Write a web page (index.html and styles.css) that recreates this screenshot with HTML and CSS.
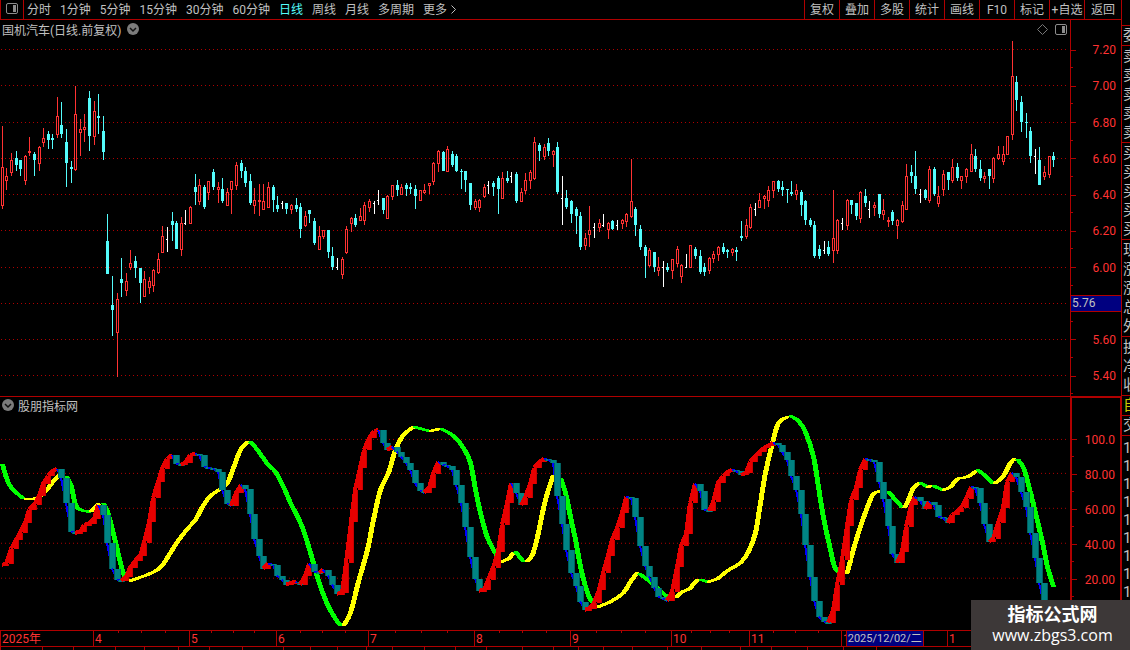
FILE: index.html
```
<!DOCTYPE html>
<html lang="zh-CN">
<head>
    <meta charset="UTF-8">
    <meta name="viewport" content="width=device-width, initial-scale=1.0">
    <title>国机汽车 日线</title>
    <link rel="stylesheet" href="styles.css">
</head>
<body>
    <div class="app">
        <div class="main">
            <!-- Period toolbar -->
            <div class="toolbar">
                <button class="panel-btn" aria-label="侧栏">
                    <svg width="12" height="11" viewBox="0 0 12 11">
                        <rect x="0.5" y="0.5" width="11" height="10" rx="1.5" fill="none" stroke="#8c8c8c"/>
                        <rect x="7" y="2" width="3" height="7" fill="#8c8c8c"/>
                    </svg>
                </button>
                <div class="periods">
                    <button>分时</button>
                    <button>1分钟</button>
                    <button>5分钟</button>
                    <button>15分钟</button>
                    <button>30分钟</button>
                    <button>60分钟</button>
                    <button class="active">日线</button>
                    <button>周线</button>
                    <button>月线</button>
                    <button>多周期</button>
                    <button>更多<svg class="more" width="5" height="9" viewBox="0 0 5 9"><path d="M0.5 0.5L4.5 4.5L0.5 8.5" fill="none" stroke="#c0c0c0"/></svg></button>
                </div>
                <div class="tools">
                    <button>复权</button>
                    <button>叠加</button>
                    <button>多股</button>
                    <button>统计</button>
                    <button>画线</button>
                    <button>F10</button>
                    <button>标记</button>
                    <button>+自选</button>
                    <button>返回</button>
                </div>
            </div>

            <!-- Price chart -->
            <div class="pane price">
                <div class="plot">
                    <svg id="price" class="chart" viewBox="0 20 1070 376" preserveAspectRatio="none"></svg>
                    <div class="pane-title">
                        <span>国机汽车(日线.前复权)</span>
                        <svg width="12" height="12" viewBox="0 0 12 12">
                            <circle cx="6" cy="6" r="6" fill="#7c7c7c"/>
                            <path d="M3 5L6 8L9 5" fill="none" stroke="#111" stroke-width="1.5"/>
                        </svg>
                    </div>
                    <div class="pane-icons">
                        <svg width="11" height="11" viewBox="0 0 11 11"><path d="M5.5 0.5L10.5 5.5L5.5 10.5L0.5 5.5Z" fill="none" stroke="#777"/></svg>
                        <svg width="12" height="11" viewBox="0 0 12 11">
                            <rect x="0.5" y="0.5" width="11" height="10" rx="1.5" fill="none" stroke="#8c8c8c"/>
                            <rect x="7" y="2" width="3" height="7" fill="#8c8c8c"/>
                        </svg>
                    </div>
                </div>
                <ul class="axis">
                    <li>7.20</li>
                    <li>7.00</li>
                    <li>6.80</li>
                    <li>6.60</li>
                    <li>6.40</li>
                    <li>6.20</li>
                    <li>6.00</li>
                    <li class="cursor"><span>5.76</span></li>
                    <li>5.60</li>
                    <li>5.40</li>
                </ul>
            </div>

            <!-- Indicator chart -->
            <div class="pane indicator">
                <div class="plot">
                    <svg id="indicator" class="chart" viewBox="0 397 1070 233" preserveAspectRatio="none"></svg>
                    <div class="pane-title">
                        <svg width="12" height="12" viewBox="0 0 12 12">
                            <circle cx="6" cy="6" r="6" fill="#7c7c7c"/>
                            <path d="M3 5L6 8L9 5" fill="none" stroke="#111" stroke-width="1.5"/>
                        </svg>
                        <span>股朋指标网</span>
                    </div>
                </div>
                <ul class="axis">
                    <li>100.0</li>
                    <li>80.00</li>
                    <li>60.00</li>
                    <li>40.00</li>
                    <li>20.00</li>
                </ul>
            </div>

            <!-- Time axis -->
            <div class="months">
                <span class="first">2025年</span>
                <span>4</span>
                <span>5</span>
                <span>6</span>
                <span>7</span>
                <span>8</span>
                <span>9</span>
                <span>10</span>
                <span>11</span>
                <span class="plain">1<time datetime="2025-12-02">2025/12/02/二</time></span>
                <span class="plain">1</span>
            </div>

            <div class="tabs" id="tabs"></div>
        </div>

        <!-- Quote strip, cut off by the window edge -->
        <div class="strip">
            <div class="group head"><span>委</span></div>
            <div class="group"><span>卖</span><span>卖</span><span>卖</span><span>卖</span><span>卖</span></div>
            <div class="group"><span>买</span><span>买</span><span>买</span><span>买</span><span>买</span></div>
            <div class="group"><span>现</span><span>涨</span><span>涨</span><span>总</span><span>外</span></div>
            <div class="group"><span>换</span><span>净</span><span>收</span></div>
            <div class="group own"><span>自</span></div>
            <div class="group deal"><span>交</span></div>
            <div class="ticks"><span>1</span><span>1</span><span>1</span><span>1</span><span>1</span><span>1</span><span>1</span><span>1</span><span>1</span></div>
        </div>

        <div class="badge">
            <strong>指标公式网</strong>
            <span>www.zbgs3.com</span>
        </div>
    </div>
    <script src="script.js"></script>
</body>
</html>
```

FILE: styles.css
```
* {
    box-sizing: border-box;
}

body {
    margin: 0;
    background: #000;
    color: #c0c0c0;
    font-family: Roboto, "Noto Sans CJK SC", sans-serif;
    font-size: 12px;
}

button {
    margin: 0;
    padding: 0;
    border: none;
    background: none;
    color: inherit;
    font: inherit;
    cursor: pointer;
}

.app {
    position: relative;
    display: grid;
    grid-template-columns: minmax(0, 1fr) 9px;
    height: 100vh;
    overflow: hidden;
}

.main {
    display: flex;
    flex-direction: column;
    min-width: 0;
    min-height: 0;
}

/* Toolbar */
.toolbar {
    display: flex;
    height: 20px;
    border-bottom: 1px solid #b00000;
    white-space: nowrap;
    line-height: 18px;
}

.panel-btn {
    display: flex;
    align-items: center;
    justify-content: center;
    width: 24px;
    padding-bottom: 2px;
    border-left: 1px solid #b00000;
    border-right: 1px solid #b00000;
}

.periods {
    display: flex;
    gap: 9px;
    padding-left: 3px;
}

.periods .active {
    color: #54fcfc;
}

.more {
    margin-left: 4px;
}

.tools {
    display: flex;
    margin-left: auto;
}

.tools button {
    width: 35px;
    border-left: 1px solid #b00000;
}

.tools button:last-child {
    width: 37px;
}

/* Chart panes */
.pane {
    display: grid;
    grid-template-columns: minmax(0, 1fr) 51px;
    min-height: 0;
}

.price {
    flex: 377 1 0;
    border-bottom: 1px solid #b00000;
}

.indicator {
    flex: 233 1 0;
}

.plot {
    position: relative;
    min-height: 0;
}

.chart {
    display: block;
    width: 100%;
    height: 100%;
    shape-rendering: crispEdges;
}

.plot .chart {
    position: absolute;
    inset: 0;
}

.pane-title {
    position: absolute;
    top: 0;
    left: 2px;
    display: flex;
    align-items: center;
    gap: 6px;
    height: 18px;
}

.indicator .pane-title {
    gap: 4px;
    height: 16px;
}

.pane-icons {
    position: absolute;
    top: 4px;
    right: 3px;
    display: flex;
    gap: 7px;
}

.axis {
    display: flex;
    flex-direction: column;
    min-height: 0;
    margin: 0;
    padding: 12px 0 2px;
    border-left: 1px solid #b00000;
    list-style: none;
    color: #ff3232;
    font-size: 12px;
}

.axis li {
    flex: 1;
    display: flex;
    align-items: center;
    justify-content: flex-end;
    padding-right: 5px;
    background:
        linear-gradient(#b00000, #b00000) 0 50% / 5px 1px no-repeat,
        linear-gradient(#b00000, #b00000) 0 100% / 2px 1px no-repeat;
}

.axis .cursor {
    padding: 0;
}

.cursor span {
    width: 100%;
    height: 17px;
    padding-left: 1px;
    border: solid #b00000;
    border-width: 1px 0;
    background: #000080;
    color: #c0c0c0;
    line-height: 15px;
}

.indicator .axis {
    padding: 24px 0 33px;
    border: solid #b00000;
    border-width: 1px 1px 0 2px;
}

/* Time axis */
.months {
    display: grid;
    grid-template-columns: 93fr 96fr 87fr 92fr 106fr 96fr 101fr 78fr 92fr 106fr 174fr;
    height: 16px;
    border-top: 1px solid #b00000;
    color: #ff3232;
    line-height: 16px;
    white-space: nowrap;
}

.months > span {
    display: flex;
    min-width: 0;
    padding-left: 1px;
    border-left: 1px solid #b00000;
    background:
        linear-gradient(#b00000, #b00000) 25% 0 / 1px 2px no-repeat,
        linear-gradient(#b00000, #b00000) 50% 0 / 1px 2px no-repeat,
        linear-gradient(#b00000, #b00000) 75% 0 / 1px 2px no-repeat;
}

.months .first,
.months .plain {
    background: none;
}

.months time {
    margin-left: -4px;
    padding: 0 1px;
    border: solid #b00000;
    border-width: 0 1px;
    background: #000080;
    color: #c0c0c0;
    font-size: 11px;
}

/* Top edge of the tab row under the charts */
.tabs {
    display: flex;
    height: 4px;
    border-top: 1px solid #b00000;
    overflow: hidden;
}

.tabs i {
    border-left: 1px solid #b00000;
}

/* Quote strip */
.strip {
    padding-top: 25px;
    border-left: 1px solid #b00000;
    overflow: hidden;
    font-size: 15px;
}

.strip span {
    display: block;
    width: 16px;
    height: 19px;
    padding-left: 1px;
    line-height: 19px;
}

.group {
    padding-top: 1px;
    border-top: 1px solid #b00000;
}

.group.head {
    padding: 0;
}

.group.own {
    padding: 0;
    color: #c8c800;
}

.group.deal {
    padding: 0;
    border-bottom: 1px solid #b00000;
}

.ticks {
    padding-top: 3px;
}

.ticks span {
    height: 18px;
    line-height: 18px;
}

/* Site badge */
.badge {
    position: absolute;
    right: 0;
    bottom: 0;
    display: flex;
    flex-direction: column;
    align-items: center;
    width: 159px;
    height: 50px;
    padding-top: 4px;
    padding-left: 4px;
    background: #3d3838;
    color: #fff;
    font-family: "Open Sans", "Noto Sans CJK SC", sans-serif;
    font-size: 16px;
    line-height: 21px;
}

.badge strong {
    font-size: 18px;
}
```

FILE: script.js
```
const NS = 'http://www.w3.org/2000/svg';

// one bar per trading day: high, body top, body bottom, low, kind (r up, c down, w flat)
const bars = [
    [126,167,206,209,'r'],[168,176,181,190,'r'],[153,160,173,176,'r'],[151,158,165,171,'c'],[160,160,169,176,'c'],
    [155,156,181,185,'r'],[137,151,153,156,'r'],[152,154,160,176,'c'],[146,147,164,171,'r'],[128,138,143,147,'r'],
    [131,134,140,149,'c'],[134,138,140,149,'c'],[97,116,135,138,'r'],[102,125,134,138,'c'],[129,142,163,187,'c'],
    [161,167,169,183,'c'],[86,114,170,171,'r'],[119,129,133,156,'r'],[114,127,130,142,'r'],[91,98,136,151,'c'],
    [101,111,137,145,'r'],[94,116,118,134,'c'],[116,131,152,160,'c'],[214,241,274,274,'c'],[276,305,310,336,'c'],
    [293,299,333,377,'r'],[258,279,283,297,'c'],[273,281,291,296,'r'],[250,263,268,270,'r'],[256,261,268,278,'c'],
    [268,268,283,303,'c'],[271,279,297,297,'r'],[277,281,288,294,'r'],[269,270,286,292,'r'],[253,259,273,274,'r'],
    [226,236,253,253,'r'],[227,239,239,252,'w'],[212,221,225,241,'c'],[221,223,249,249,'c'],[217,223,250,256,'r'],
    [210,223,223,225,'w'],[206,207,224,224,'r'],[174,187,192,205,'c'],[179,185,202,205,'r'],[185,187,207,209,'c'],
    [181,181,193,200,'r'],[169,172,187,190,'c'],[182,187,190,203,'r'],[178,189,201,203,'c'],[188,192,206,206,'r'],
    [181,181,190,214,'r'],[162,165,186,190,'r'],[160,163,171,178,'c'],[167,171,183,187,'c'],[174,181,203,205,'c'],
    [188,200,206,214,'r'],[184,200,202,216,'r'],[184,201,210,210,'r'],[182,187,208,208,'r'],[185,187,200,212,'c'],
    [196,205,209,212,'c'],[201,203,203,209,'w'],[203,203,209,214,'c'],[204,205,210,214,'r'],[198,205,209,212,'c'],
    [203,207,229,238,'c'],[211,216,226,227,'r'],[210,210,214,223,'c'],[218,221,243,245,'c'],[226,236,250,250,'r'],
    [230,230,237,239,'r'],[230,230,252,258,'c'],[247,256,267,270,'c'],[258,267,267,270,'w'],[257,259,275,279,'r'],
    [226,229,253,254,'r'],[217,218,224,232,'r'],[214,218,225,227,'c'],[208,216,221,221,'r'],[202,205,221,225,'r'],
    [199,201,208,212,'r'],[201,203,203,214,'w'],[190,200,200,205,'w'],[198,198,210,214,'c'],[195,196,219,219,'r'],
    [185,185,197,200,'r'],[180,185,190,196,'c'],[184,187,195,195,'r'],[183,185,189,196,'c'],[183,187,189,194,'c'],
    [185,189,196,209,'c'],[190,190,201,201,'r'],[184,190,193,194,'r'],[183,183,186,194,'r'],[162,163,182,185,'r'],
    [150,151,164,172,'r'],[151,152,171,171,'c'],[146,149,172,172,'r'],[151,154,165,167,'c'],[154,156,171,172,'c'],
    [169,171,172,189,'c'],[171,171,180,192,'c'],[183,183,205,210,'c'],[199,201,208,210,'r'],[199,200,208,212,'r'],
    [184,187,197,198,'r'],[181,185,185,194,'w'],[181,183,187,196,'c'],[176,178,189,214,'c'],[172,178,199,199,'r'],
    [171,178,181,183,'c'],[172,176,176,183,'w'],[172,174,201,203,'c'],[188,192,202,202,'r'],[173,180,191,194,'r'],
    [170,172,181,189,'r'],[137,142,179,180,'r'],[143,145,151,161,'c'],[144,147,157,160,'r'],[138,143,151,156,'c'],
    [150,151,155,167,'r'],[142,147,192,194,'c'],[176,198,198,225,'w'],[190,198,207,209,'c'],[200,201,214,223,'c'],
    [207,209,216,234,'c'],[212,216,247,250,'c'],[233,238,246,250,'r'],[206,230,235,247,'r'],[223,227,227,238,'w'],
    [219,223,228,232,'r'],[214,225,225,227,'w'],[222,223,230,239,'r'],[220,221,229,230,'c'],[220,225,225,230,'w'],
    [219,220,224,229,'r'],[213,214,222,227,'r'],[159,201,217,218,'r'],[207,209,225,236,'c'],[225,229,247,250,'c'],
    [245,247,256,278,'c'],[248,250,266,267,'r'],[252,252,267,272,'c'],[257,267,271,276,'r'],[261,267,267,287,'w'],
    [263,267,270,272,'c'],[259,259,271,279,'r'],[246,249,264,267,'r'],[264,265,277,283,'r'],[254,267,267,268,'w'],
    [245,245,268,268,'r'],[247,249,256,259,'c'],[250,256,272,274,'c'],[263,267,272,276,'c'],[257,258,271,274,'r'],
    [251,254,259,263,'r'],[246,247,255,261,'r'],[243,247,252,254,'c'],[249,250,252,258,'c'],[248,249,253,256,'r'],
    [247,250,252,261,'c'],[221,236,238,241,'c'],[219,225,237,239,'r'],[204,207,228,229,'r'],[203,209,209,216,'w'],
    [193,200,208,208,'r'],[195,196,199,209,'r'],[186,190,201,207,'r'],[181,181,191,198,'r'],[180,181,189,192,'c'],
    [181,187,190,196,'c'],[189,189,190,203,'c'],[181,192,194,196,'c'],[184,190,195,200,'r'],[190,192,205,216,'c'],
    [200,201,220,225,'c'],[218,220,225,227,'c'],[221,225,256,258,'c'],[245,249,256,259,'c'],[241,250,250,254,'w'],
    [241,247,254,256,'c'],[190,238,251,263,'r'],[219,220,251,254,'r'],[218,223,223,230,'w'],[199,200,226,230,'r'],
    [200,200,205,214,'c'],[203,203,216,220,'c'],[191,192,219,223,'r'],[189,196,203,207,'c'],[201,209,209,218,'w'],
    [202,205,208,216,'r'],[194,194,214,218,'c'],[199,210,215,220,'r'],[217,220,222,227,'r'],[210,212,221,225,'c'],
    [219,220,226,239,'r'],[201,205,222,223,'r'],[164,176,210,210,'r'],[165,172,176,183,'c'],[151,176,189,194,'c'],
    [189,194,194,203,'w'],[189,190,198,200,'c'],[166,169,201,203,'r'],[167,169,194,196,'c'],[186,196,204,207,'r'],
    [170,174,190,196,'r'],[172,172,180,190,'c'],[159,167,181,183,'r'],[163,167,178,181,'c'],[176,176,181,189,'r'],
    [168,169,177,183,'r'],[144,154,172,172,'r'],[149,156,169,172,'c'],[160,169,178,181,'c'],[172,176,179,183,'r'],
    [169,169,176,189,'c'],[157,158,179,183,'r'],[146,154,159,160,'r'],[146,154,162,165,'r'],[136,136,155,155,'r'],
    [41,76,135,140,'r'],[76,82,100,111,'c'],[96,102,122,132,'c'],[113,122,123,138,'c'],[127,131,156,163,'c'],
    [149,156,156,174,'w'],[147,160,185,185,'c'],[166,172,177,180,'r'],[156,156,175,178,'r'],[152,156,160,167,'c']
];

// fast line, one value per day
const fast = [
    565,564,549,540,533,523,510,505,496,484,476,471,469,478,503,532,533,532,525,524,519,505,515,543,569,
    580,581,577,568,561,556,543,522,498,482,469,459,455,464,465,463,455,454,455,467,468,469,472,490,504,
    506,493,485,489,514,539,556,569,564,565,576,580,585,583,582,585,576,564,572,573,570,576,585,594,593,
    563,522,490,468,450,438,431,430,443,450,447,452,457,463,470,483,491,493,488,474,462,465,466,470,485,
    503,527,557,579,591,590,580,568,552,525,503,483,493,505,498,484,468,462,459,460,463,496,524,550,573,
    586,602,610,609,603,590,573,556,540,528,513,497,498,517,546,566,577,588,597,599,601,592,567,546,534,
    503,484,491,510,511,502,483,476,472,470,471,475,473,462,456,452,448,446,443,445,452,460,476,490,514,
    545,577,601,617,622,623,611,585,560,526,500,488,470,459,460,462,482,499,526,554,563,552,527,505,497,
    501,509,502,505,517,518,523,515,512,508,499,487,488,503,524,542,539,523,508,482,473,477,492,507,533,
    558,583,605,620,626
];

// slow line, cut where its direction changes: y up, g down
const slow = [
    ['g', [2,464,5,475,9,485,15,492,23,499]],
    ['y', [25,499,37,498,47,489,53,481,60,474]],
    ['g', [66,476,71,487,75,505,80,510,89,512]],
    ['y', [90,512,94,508,98,504]],
    ['g', [103,503,107,512,112,530,118,555,122,571,126,580]],
    ['y', [130,581,147,575,157,570,163,564,170,553,177,542,187,529,195,520,202,507,210,496,220,489,227,483,233,468,240,450,247,442]],
    ['g', [250,442,257,450,267,464,275,472,283,487,290,503,300,523,307,543,314,567,320,587,328,607,337,622,341,626]],
    ['y', [343,626,350,613,358,582,367,550,373,520,380,490,388,473,395,450,403,435,413,427]],
    ['g', [414,427,421,429,429,431]],
    ['y', [430,431,439,429]],
    ['g', [441,429,453,436,463,448,470,463,475,490,480,513,487,538,497,557]],
    ['y', [501,562,508,559,513,553]],
    ['g', [515,552,523,562]],
    ['y', [526,562,532,555,537,537,542,513,547,493,553,475]],
    ['g', [560,478,565,493,570,517,575,540,580,567,585,587,590,600,594,604]],
    ['y', [598,607,610,602,623,593,630,582,637,573]],
    ['g', [639,574,652,584,663,594,670,599]],
    ['y', [675,598,682,592,689,589,695,582,698,580]],
    ['g', [700,580,707,582]],
    ['y', [708,582,717,579,727,571,740,563,748,552,755,533,760,503,765,473,772,443,778,423,787,417]],
    ['g', [790,416,798,421,805,432,813,457,818,487,823,518,830,550,834,567,839,573]],
    ['y', [845,572,847,572,852,553,858,533,867,507,873,494,881,491]],
    ['g', [888,492,895,500,902,508]],
    ['y', [904,508,908,500,913,488,919,483]],
    ['g', [920,483,927,487]],
    ['y', [927,487,932,486]],
    ['g', [933,486,942,490]],
    ['y', [943,490,950,487,957,479,967,477,976,471]],
    ['g', [977,470,985,476,993,484]],
    ['y', [994,484,1003,476,1010,463,1014,459]],
    ['g', [1017,459,1023,468,1028,485,1035,513,1042,543,1047,567,1053,587]]
];

function add(parent, name, attrs) {
    const el = document.createElementNS(NS, name);
    for (const key in attrs) {
        el.setAttribute(key, attrs[key]);
    }
    parent.appendChild(el);
    return el;
}

function rect(parent, x, y, width, height, fill) {
    add(parent, 'rect', { x, y, width, height, fill });
}

function dayX(i) {
    return Math.floor(2.3 + 4.591 * i);
}

function drawGrid(svg, rows) {
    rows.forEach(y => add(svg, 'path', {
        d: `M1 ${y + 0.5}H1068`, stroke: '#b00000', 'stroke-dasharray': '1 3'
    }));
}

// rounds off a list of points into bezier segments
function smoothPath(p) {
    let d = `M${p[0]} ${p[1]}`;
    const n = p.length / 2;
    const at = k => {
        const j = Math.max(0, Math.min(n - 1, k));
        return [p[j * 2], p[j * 2 + 1]];
    };
    for (let k = 0; k < n - 1; k++) {
        const [a, b, c, e] = [at(k - 1), at(k), at(k + 1), at(k + 2)];
        d += `C${b[0] + (c[0] - a[0]) / 6} ${b[1] + (c[1] - a[1]) / 6} ${c[0] - (e[0] - b[0]) / 6} ${c[1] - (e[1] - b[1]) / 6} ${c[0]} ${c[1]}`;
    }
    return d;
}

function drawPrice() {
    const svg = document.getElementById('price');
    drawGrid(svg, [49, 85, 122, 158, 194, 230, 267, 303, 339, 375]);
    bars.forEach(([high, top, bottom, low, kind], i) => {
        const x = dayX(i);
        if (kind === 'w') {
            rect(svg, x, high, 1, low - high, '#fff');
            rect(svg, x - 1, top, 1, 1, '#fff');
        } else if (kind === 'c') {
            rect(svg, x, high, 1, low - high, '#54fcfc');
            rect(svg, x - 1, top, 3, bottom - top, '#54fcfc');
        } else {
            rect(svg, x, high, 1, low - high, '#ff3232');
            rect(svg, x - 1, top, 3, bottom - top, '#ff3232');
            if (bottom - top > 2) {
                rect(svg, x, top + 1, 1, bottom - top - 2, '#000');
            }
        }
    });
}

function drawIndicator() {
    const svg = document.getElementById('indicator');
    drawGrid(svg, [439, 473, 508, 543, 578]);

    slow.forEach(([kind, points]) => {
        const d = smoothPath(points);
        [-1, 0, 1, 2].forEach(dx => add(svg, 'path', {
            d, transform: `translate(${dx} 0)`, fill: 'none',
            stroke: kind === 'y' ? '#ffff00' : '#00ff00', 'stroke-width': 2
        }));
    });

    for (let i = 1; i < fast.length; i++) {
        const x = dayX(i);
        const up = fast[i] < fast[i - 1];
        add(svg, 'path', {
            d: `M${dayX(i - 1)} ${fast[i - 1]}L${x} ${fast[i]}`,
            stroke: up ? '#e60000' : '#0000ff', 'stroke-width': up ? 4 : 2
        });
        const top = Math.min(fast[i], fast[i - 1]);
        const height = Math.max(2, Math.abs(fast[i] - fast[i - 1]));
        if (up) {
            rect(svg, x - 2, top, 5, height, '#c80000');
            rect(svg, x - 2, top, 4, height, '#e80000');
        } else {
            rect(svg, x - 3, top, 7, height, '#006060');
            rect(svg, x - 2, top, 5, height, '#008484');
        }
    }
}

function drawTabs() {
    const stops = [0, 42, 73, 115, 144, 177, 208, 241, 282, 309, 335, 364, 390, 422, 452, 483, 519, 550, 574,
        599, 628, 663, 696, 735, 766, 802, 838, 871, 1121];
    const row = document.getElementById('tabs');
    for (let i = 0; i < stops.length - 1; i++) {
        const cell = document.createElement('i');
        cell.style.flex = `${stops[i + 1] - stops[i]} 1 0`;
        row.appendChild(cell);
    }
}

drawPrice();
drawIndicator();
drawTabs();
```
